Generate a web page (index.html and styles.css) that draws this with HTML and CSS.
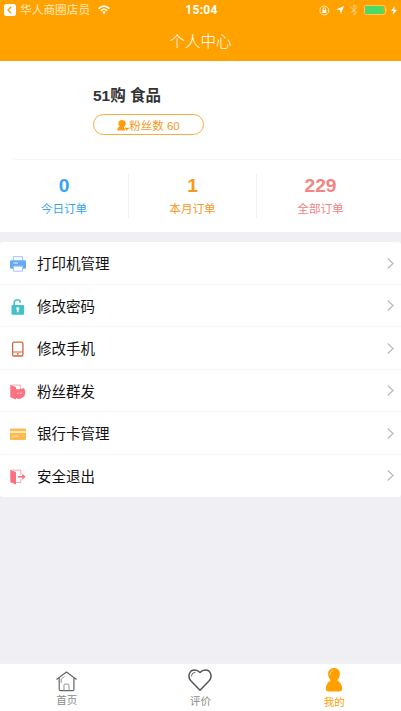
FILE: index.html
```html
<!DOCTYPE html>
<html lang="zh-CN">
<head>
<meta charset="utf-8">
<title>个人中心</title>
<link rel="stylesheet" href="styles.css">
</head>
<body>
<div class="app">
  <header class="header">
    <div class="status">
      <div class="status-left">
        <svg width="12" height="12" viewBox="0 0 12 12"><rect width="12" height="12" rx="2.5" fill="#fff"/><path d="M7.2 2.8L4 6l3.2 3.2" fill="none" stroke="#ffa200" stroke-width="1.4"/></svg>
        <span class="back-app">华人商圈店员</span>
        <svg class="wifi" width="12" height="10" viewBox="0 0 12 10" fill="none" stroke="#fff" stroke-width="1.5"><path d="M.6 3.6Q6-1.4 11.4 3.6M2.7 5.7Q6 2.7 9.3 5.7"/><path d="M4.2 7.1Q6 5.6 7.8 7.1L6 9.2z" fill="#fff" stroke="none"/></svg>
      </div>
      <time class="clock">15:04</time>
      <div class="status-right">
        <svg width="11" height="11" viewBox="0 0 11 11"><circle cx="5.3" cy="5.5" r="4.5" fill="none" stroke="#ffefd0" stroke-width=".9"/><rect x="3.3" y="5" width="4" height="3" fill="#fff"/><path d="M4.1 5V4a1.2 1.2 0 0 1 2.4 0v1" fill="none" stroke="#fff" stroke-width=".8"/></svg>
        <svg width="8" height="8" viewBox="0 0 8 8"><path d="M8 0L4.8 8 4 4 0 3.4z" fill="#fff"/></svg>
        <svg width="8" height="12" viewBox="0 0 8 12"><path d="M.7 3.2l6.2 5.4L4 11.2V.8l2.9 2.6L.7 8.8" fill="none" stroke="#ffd48a" stroke-width=".9"/></svg>
        <svg width="24" height="10" viewBox="0 0 24 10"><rect x=".5" y=".5" width="21" height="9" rx="1.6" fill="none" stroke="#ffd178" stroke-width=".8"/><rect x="1" y="1" width="18.5" height="8" rx="1" fill="#4cd964"/><path d="M22.4 3.4q1.3 1.6 0 3.2z" fill="#ffe2a8"/></svg>
        <svg class="bolt" width="6" height="9" viewBox="0 0 6 9"><path d="M3.8 0L0 5h2.4L1.7 9 6 3.8H3.3z" fill="#fff"/></svg>
      </div>
    </div>
    <h1 class="title">个人中心</h1>
  </header>

  <section class="profile">
    <div class="identity">
      <h2 class="name">51购 食品</h2>
      <div class="fans">
        <svg width="12" height="11" viewBox="0 0 12 11" fill="#ff9d0a"><path d="M5 0C2.600 0 1.400 1.500 1.400 3.500c0 1.400.6 2.500 1.400 3.100C1.200 7.200.3 8.200.2 10.600h8L6.900 6.800C7.900 6.200 8.800 5 8.800 3.400 8.800 1.400 7.400 0 5 0z"/><path d="M9.800 10.500L7.800 8.600c-.7-1 .9-1.700 2-.5 1.100-1.200 2.700-.5 2 .5z"/></svg>
        <span>粉丝数 60</span>
      </div>
    </div>
    <div class="stats">
      <div class="stat today"><strong>0</strong><span>今日订单</span></div>
      <div class="stat month"><strong>1</strong><span>本月订单</span></div>
      <div class="stat all"><strong>229</strong><span>全部订单</span></div>
    </div>
  </section>

  <nav class="menu">
    <a class="row">
      <svg class="icon" width="16" height="16" viewBox="0 0 16 16"><path d="M3.400 5V.7h9.200V5" fill="#fff" stroke="#9cc6f7"/><rect y="4.300" width="16" height="8.500" rx="1.400" fill="#66aaf2"/><path d="M3.500 10.200h9v5h-9z" fill="#fff" stroke="#9cc6f7"/><path d="M3.500 7h4.500" stroke="#e1effd" stroke-width="1.100"/></svg>
      <span>打印机管理</span><svg class="arrow" width="7" height="11" viewBox="0 0 7 11"><path d="M.7.600L6 5.500.7 10.400"/></svg>
    </a>
    <a class="row">
      <svg class="icon" width="16" height="16" viewBox="0 0 16 16"><path d="M4.200 7V3.900C4.200 2 5.500.8 7.300.8s3.100 1.100 3.100 3" fill="none" stroke="#43c0c8" stroke-width="1.500"/><rect x="1.500" y="5.900" width="12.600" height="9.800" rx="1.200" fill="#43c0c8"/><circle cx="7.800" cy="9.700" r="1.600" fill="#fff"/><path d="M7.100 10h1.400v3.200H7.100z" fill="#fff"/></svg>
      <span>修改密码</span><svg class="arrow" width="7" height="11" viewBox="0 0 7 11"><path d="M.7.600L6 5.500.7 10.400"/></svg>
    </a>
    <a class="row">
      <svg class="icon" width="16" height="16" viewBox="0 0 16 16"><rect x="2.600" y="1.200" width="10.300" height="13.800" rx="1.600" fill="#fff" stroke="#c9683f" stroke-width="1.300"/><path d="M3 11h9.600" stroke="#c9683f"/><circle cx="7.750" cy="12.900" r=".95" fill="#c9683f"/></svg>
      <span>修改手机</span><svg class="arrow" width="7" height="11" viewBox="0 0 7 11"><path d="M.7.600L6 5.500.7 10.400"/></svg>
    </a>
    <a class="row">
      <svg class="icon" width="16" height="16" viewBox="0 0 16 16"><path d="M.3.700L6 3.300v12.200L.3 13.200z" fill="#fa7280"/><path d="M1.500 1.100h8.800v4" fill="none" stroke="#fb9aa3" stroke-width=".9"/><path d="M4.800 4.400Q8 5.700 10.300 5L13.800 4q1.500 2 1.400 4.600c0 3.900-2.900 6.300-6.300 6.300-1.600 0-3-.5-4.100-1.400z" fill="#fa7280"/><path d="M7.300 9.200h1.200M10.300 9.200h1.200" stroke="#fff" stroke-width="1.100"/></svg>
      <span>粉丝群发</span><svg class="arrow" width="7" height="11" viewBox="0 0 7 11"><path d="M.7.600L6 5.500.7 10.400"/></svg>
    </a>
    <a class="row">
      <svg class="icon" width="16" height="16" viewBox="0 0 16 16"><rect y="2.500" width="16" height="11.500" rx="1" fill="#fdbb4f"/><path d="M0 6h16" stroke="#fff" stroke-width="1.300"/><path d="M2 11.500l1.500-1.300h5" fill="none" stroke="#ffedcb" stroke-width=".9"/></svg>
      <span>银行卡管理</span><svg class="arrow" width="7" height="11" viewBox="0 0 7 11"><path d="M.7.600L6 5.500.7 10.400"/></svg>
    </a>
    <a class="row">
      <svg class="icon" width="16" height="16" viewBox="0 0 16 16"><path d="M.3.700L6 3.300v12.200L.3 13.200z" fill="#fa7280"/><path d="M1.500 1.100h9.300v4.600M6 13.500h4.800V10" fill="none" stroke="#fb9aa3" stroke-width=".9"/><path d="M8 7.800h6" fill="none" stroke="#fa7280" stroke-width="1.600"/><path d="M12.200 4.800l3.400 3-3.400 3z" fill="#fa7280"/></svg>
      <span>安全退出</span><svg class="arrow" width="7" height="11" viewBox="0 0 7 11"><path d="M.7.600L6 5.500.7 10.400"/></svg>
    </a>
  </nav>

  <footer class="tabs">
    <a class="tab home">
      <svg width="21" height="21" viewBox="0 0 21 21" fill="none" stroke="#666" stroke-width="1.200" stroke-linejoin="round" stroke-linecap="round"><path d="M.8 8.200L10.500 1l9.700 7.200M3.200 7v11.500q0 1.200 1.200 1.200h12.300q1.200 0 1.200-1.200V7"/><path d="M8 19.500v-5.400q0-1 1-1h3q1 0 1 1v5.400M5.200 11.500V8.200l3-2.500" stroke-width=".9" stroke="#888"/></svg>
      <span>首页</span>
    </a>
    <a class="tab review">
      <svg width="24" height="22" viewBox="0 0 24 22" fill="none" stroke="#555" stroke-width="1.500" stroke-linejoin="round"><path d="M12 21.200L2.600 11.500C-.6 7.500 1.300 1 6.500 1 9 1 10.700 1.900 12 3.400 13.300 1.900 15 1 17.500 1c5.200 0 7.100 6.500 3.900 10.500z"/><path d="M3.400 7Q3.500 3.500 7 3.300" stroke-width=".9" stroke-linecap="round"/></svg>
      <span>评价</span>
    </a>
    <a class="tab mine">
      <svg width="18" height="24" viewBox="0 0 18 24"><path d="M9 0C5.500 0 3.100 2.500 3.100 6c0 2.500 1.100 4.700 2.700 6.300C2.800 14.100 1 17 .8 20.500.7 22.700 2 23.500 4 23.500h10c2 0 3.300-.8 3.200-3-.2-3.500-2-6.400-5-8.200C13.800 10.700 14.900 8.500 14.900 6c0-3.500-2.400-6-5.900-6z" fill="#ffa000"/><path d="M4.900 6.700Q4.900 3.200 8 2" fill="none" stroke="#ffd078" stroke-width=".9" stroke-linecap="round"/></svg>
      <span>我的</span>
    </a>
  </footer>
</div>
</body>
</html>
```
FILE: styles.css
```css
* { box-sizing: border-box; }

body {
  margin: 0;
  font-family: "Liberation Sans", "Noto Sans CJK SC", sans-serif;
  background: #efeff4;
}

svg { display: block; flex: none; }

.app {
  display: flex;
  flex-direction: column;
  height: 711px;
  overflow: hidden;
}

.header {
  height: 61px;
  flex: none;
  background: #ffa200;
  color: #fff;
}

.status {
  display: grid;
  grid-template-columns: 1fr auto 1fr;
  align-items: center;
  height: 20px;
  padding: 0 4px;
}

.status-left,
.status-right {
  display: flex;
  align-items: center;
}

.back-app {
  margin-left: 4px;
  font-size: 11.7px;
  line-height: 18px;
  color: #ffe9bd;
}

.wifi { margin-left: 8px; }

.clock {
  padding-left: 2px;
  font: bold 12px/20px Roboto, sans-serif;
  letter-spacing: 0.35px;
}

.status-right {
  justify-content: flex-end;
  gap: 6px;
}

.status-right .bolt { margin-left: -3px; }

.title {
  margin: 0;
  font-size: 15.5px;
  font-weight: 300;
  line-height: 44px;
  text-align: center;
}

.profile {
  height: 171px;
  flex: none;
  background: #fff;
}

.identity {
  height: 99px;
  margin-left: 14px;
  padding: 22px 0 0 79px;
  border-bottom: 1px solid #f6f6f6;
}

.name {
  margin: 0;
  font-size: 15.5px;
  line-height: 25px;
  font-weight: bold;
  color: #333;
}

.fans {
  display: flex;
  align-items: center;
  justify-content: center;
  width: 111px;
  height: 21px;
  margin-top: 6px;
  padding-top: 2px;
  border: 1px solid #f7ac3b;
  border-radius: 11px;
  font-size: 11.5px;
  line-height: 18px;
  color: #f59a23;
}

.stats {
  display: grid;
  grid-template-columns: repeat(3, 128px);
  padding-top: 14px;
}

.stat {
  display: flex;
  flex-direction: column;
  align-items: center;
  height: 44px;
}

.stat + .stat { border-left: 1px solid #f2f2f2; }

.stat strong {
  font-size: 19.2px;
  line-height: 23px;
}

.stat span {
  margin-top: 2px;
  font-size: 11.6px;
  line-height: 19px;
}

.today { color: #35a5ef; }
.month { color: #f7981d; }
.all { color: #f28484; }

.menu {
  height: 255px;
  flex: none;
  display: grid;
  grid-template-rows: repeat(6, 1fr);
  margin-top: 10px;
  background: #fff;
  border-radius: 3px;
}

.row {
  display: flex;
  align-items: center;
  padding: 0 7px 0 10px;
  font-size: 14.5px;
  line-height: 22px;
  color: #111;
  box-shadow: inset 0 -1px #f7f7f7;
}

.row:last-child { box-shadow: none; }

.row span {
  flex: 1;
  margin-left: 11px;
  padding-top: 2px;
}

.icon { margin-top: 2px; }

.arrow {
  fill: none;
  stroke: #b9bdc0;
  stroke-width: 1.3;
}

.tabs {
  display: grid;
  grid-template-columns: repeat(3, 1fr);
  height: 48px;
  flex: none;
  margin-top: auto;
  background: #fff;
  border-top: 1px solid #f2f2f5;
}

.tab {
  display: flex;
  flex-direction: column;
  align-items: center;
  font-size: 10.5px;
  line-height: 14px;
  color: #8c8c8c;
}

.home { padding-top: 7px; }
.home span { margin-top: 1px; }
.review { padding-top: 5px; }
.review span { margin-top: 3px; }
.mine { padding-top: 4px; color: #ffa000; }
.mine span { margin-top: 3px; }
```
